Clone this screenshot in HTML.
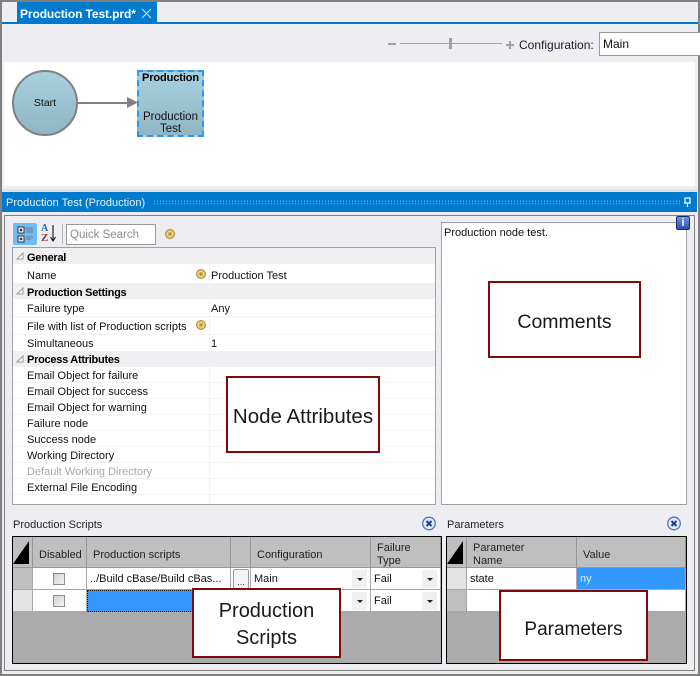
<!DOCTYPE html>
<html><head><meta charset="utf-8">
<style>
html,body{margin:0;padding:0;background:#eeeef2}
#r{position:relative;width:700px;height:676px;overflow:hidden;background:#eeeef2;font:11px/14px "Liberation Sans",sans-serif;color:#111}
#r div,#r span.a{position:absolute;box-sizing:border-box}
.t{white-space:nowrap}
.b{font-weight:bold;color:#000;letter-spacing:-.27px}
.ann{background:#fff;border:2px solid #7f0a0a;color:#1a1a1a;line-height:27px;text-align:center;display:flex;align-items:center;justify-content:center}
.coin{width:10px;height:10px;border-radius:50%;background:radial-gradient(circle at 50% 50%,#b98f35 0,#b98f35 25%,#efd88e 35%,#cda544 100%);border:1px solid #b58d35}
.h{background:#bfbfbf;border-right:1px solid #969696;border-bottom:1px solid #969696;padding:7px 0 0 6px;display:flex;align-items:center;line-height:13px;color:#222}
.h2{padding-top:6px}
.cell{background:#fff;border-right:1px solid #a8a8a8;border-bottom:1px solid #a8a8a8;line-height:23px;white-space:nowrap;overflow:hidden}
.chk{width:12px;height:12px;border:1px solid #8e8e8e;background:linear-gradient(135deg,#d0d0d0,#f5f5f5)}
.dd{width:15px;height:18px;background:#f0f0f0}
.dd:after{content:"";position:absolute;left:5px;top:8px;border:3px solid transparent;border-top:3px solid #222;border-bottom:0}
.grid{background:#ababab;border:1px solid #000}
.ln{height:1px;left:13px;width:422px;background:#f2f2f2}
</style></head><body>
<div id="r">
<!-- outer frame -->
<div style="left:0;top:0;width:700px;height:2px;background:#808080"></div>
<div style="left:0;top:0;width:2px;height:676px;background:#808080"></div>
<div style="left:698px;top:0;width:2px;height:676px;background:#808080"></div>
<div style="left:0;top:674px;width:700px;height:2px;background:#808080"></div>
<!-- tab -->
<div style="left:17px;top:2px;width:140px;height:21px;background:#007acc"></div>
<div class="t" style="left:20px;top:7px;color:#fff;font-weight:bold;font-size:12px;letter-spacing:-.1px">Production Test.prd*</div>
<svg style="position:absolute;left:141px;top:8px" width="11" height="11"><path d="M1 1L10 10M10 1L1 10" stroke="#d5e8f5" stroke-width="1" fill="none"/></svg>
<div style="left:2px;top:22px;width:696px;height:2px;background:#007acc"></div>
<!-- zoom controls -->
<div style="left:388px;top:43px;width:8px;height:2px;background:#a0a0a0"></div>
<div style="left:400px;top:43px;width:102px;height:1px;background:#a0a0a0"></div>
<div style="left:449px;top:38px;width:3px;height:11px;background:#a0a0a0"></div>
<div style="left:506px;top:44px;width:8px;height:2px;background:#a0a0a0"></div>
<div style="left:509px;top:41px;width:2px;height:8px;background:#a0a0a0"></div>
<div class="t" style="left:519px;top:38px;font-size:12px;color:#1a1a2a">Configuration:</div>
<div style="left:599px;top:32px;width:101px;height:24px;background:#fff;border:1px solid #999;border-right:0"></div>
<div class="t" style="left:603px;top:37px;font-size:12px">Main</div>
<!-- canvas -->
<div style="left:4px;top:62px;width:691px;height:124px;background:#fff"></div>
<div style="left:2px;top:189px;width:696px;height:3px;background:#e3e3e6"></div>
<div style="left:12px;top:70px;width:66px;height:66px;border-radius:50%;border:2px solid #808080;background:linear-gradient(#a8d0de,#8fb6c4)"></div>
<div class="t" style="left:12px;top:96px;width:66px;text-align:center;font-size:10.5px;color:#111">Start</div>
<div style="left:78px;top:102px;width:50px;height:2px;background:#808080"></div>
<svg style="position:absolute;left:127px;top:97px" width="11" height="12"><path d="M0 0L11 5.500L0 11Z" fill="#808080"/></svg>
<div style="left:137px;top:70px;width:67px;height:67px;border:2px dashed #2f96f0;background:linear-gradient(#a8d0de,#8fb6c4)"></div>
<div class="t" style="left:137px;top:71px;width:67px;text-align:center;font-size:11px;font-weight:bold;color:#000;letter-spacing:-.1px">Production</div>
<div class="t" style="left:137px;top:111px;width:67px;text-align:center;font-size:11.5px;line-height:12px;height:26px;padding-top:0">Production<br>Test</div>
<!-- panel title -->
<div style="left:2px;top:192px;width:695px;height:20px;background:#007acc"></div>
<div class="t" style="left:6px;top:196px;color:#e8f3fb;font-size:11px;letter-spacing:.02px">Production Test (Production)</div>
<div style="left:153px;top:200px;width:527px;height:5px;background-image:radial-gradient(circle,#4aa3db .7px,transparent .8px);background-size:3px 2.500px"></div>
<svg style="position:absolute;left:683px;top:197px" width="9" height="11"><path d="M2 1H7V6H2ZM1 6H8M4.500 6V10" stroke="#fff" stroke-width="1.200" fill="none"/></svg>
<!-- panel frame -->
<div style="left:4px;top:215px;width:691px;height:456px;border:1px solid #808080;background:#eeeef2"></div>
<!-- property toolbar -->
<div style="left:13px;top:223px;width:24px;height:22px;background:#6cbcf5;border-radius:2px"></div>
<svg style="position:absolute;left:13px;top:223px" width="24" height="22"><rect x="5" y="4" width="6" height="6" fill="#fff" stroke="#333"/><rect x="5" y="13" width="6" height="6" fill="#fff" stroke="#333"/><path d="M6.500 7H9.500M8 5.500V8.500M6.500 16H9.500M8 14.500V17.500" stroke="#000"/><path d="M13 5H20M13 7H20M13 9H20M13 14H20M13 16H18" stroke="#6a7a85"/></svg>
<div class="t" style="left:41px;top:224px;font:bold 10px/10px 'Liberation Serif',serif;color:#2b5fb0">A</div>
<div class="t" style="left:41px;top:233px;font:bold 11px/11px 'Liberation Serif',serif;color:#8c3a3a">Z</div>
<svg style="position:absolute;left:49px;top:225px" width="9" height="18"><path d="M4 0V15M1.500 12L4 16L6.500 12" stroke="#111" stroke-width="1.100" fill="none"/></svg>
<div style="left:62px;top:224px;width:1px;height:20px;background:#b5b5b5"></div>
<div style="left:66px;top:224px;width:90px;height:21px;background:#fff;border:1px solid #999"></div>
<div class="t" style="left:70px;top:228px;font-size:11.500px;color:#8c8c8c">Quick Search</div>
<div class="coin" style="left:165px;top:229px"></div>
<!-- property grid -->
<div style="left:12px;top:247px;width:424px;height:258px;background:#fff;border:1px solid #a0a0a0"></div>
<div style="left:13px;top:248px;width:422px;height:16px;background:#f0f0f2"></div>
<div style="left:13px;top:283px;width:422px;height:16px;background:#f0f0f2"></div>
<div style="left:13px;top:351px;width:422px;height:16px;background:#f0f0f2"></div>
<div style="left:209px;top:264px;width:1px;height:240px;background:#f2f2f2"></div>
<div class="ln" style="top:316px"></div>
<div class="ln" style="top:334px"></div>
<div class="ln" style="top:382px"></div>
<div class="ln" style="top:398px"></div>
<div class="ln" style="top:414px"></div>
<div class="ln" style="top:430px"></div>
<div class="ln" style="top:446px"></div>
<div class="ln" style="top:462px"></div>
<div class="ln" style="top:478px"></div>
<div class="ln" style="top:494px"></div>
<svg style="position:absolute;left:15px;top:250px" width="10" height="115"><path d="M2 9L8 9L8 3ZM2 44L8 44L8 38ZM2 112L8 112L8 106Z" fill="#fff" stroke="#9a9a9a"/></svg>
<div class="t b" style="left:27px;top:251px">General</div>
<div class="t" style="left:27px;top:269px">Name</div>
<div class="coin" style="left:196px;top:269px"></div>
<div class="t" style="left:211px;top:269px">Production Test</div>
<div class="t b" style="left:27px;top:286px">Production Settings</div>
<div class="t" style="left:27px;top:302px">Failure type</div>
<div class="t" style="left:211px;top:302px">Any</div>
<div class="t" style="left:27px;top:320px">File with list of Production scripts</div>
<div class="coin" style="left:196px;top:320px"></div>
<div class="t" style="left:27px;top:337px">Simultaneous</div>
<div class="t" style="left:211px;top:337px">1</div>
<div class="t b" style="left:27px;top:353px">Process Attributes</div>
<div class="t" style="left:27px;top:369px">Email Object for failure</div>
<div class="t" style="left:27px;top:385px">Email Object for success</div>
<div class="t" style="left:27px;top:401px">Email Object for warning</div>
<div class="t" style="left:27px;top:417px">Failure node</div>
<div class="t" style="left:27px;top:433px">Success node</div>
<div class="t" style="left:27px;top:449px">Working Directory</div>
<div class="t" style="left:27px;top:465px;color:#a8a8a8">Default Working Directory</div>
<div class="t" style="left:27px;top:481px">External File Encoding</div>
<!-- comments -->
<div style="left:441px;top:222px;width:246px;height:283px;background:#fff;border:1px solid #a0a0a0"></div>
<div class="t" style="left:444px;top:226px">Production node test.</div>
<div style="left:676px;top:216px;width:14px;height:14px;background:linear-gradient(#6f92e6,#2d4fb5);border:1px solid #1b2a70;border-radius:2px"></div>
<div class="t" style="left:676px;top:216px;width:14px;text-align:center;color:#fff;font-weight:bold;font-size:11px">i</div>
<!-- scripts -->
<div class="t" style="left:13px;top:518px;color:#222">Production Scripts</div>
<svg style="position:absolute;left:421px;top:516px" width="16" height="16"><circle cx="8" cy="7.500" r="6.300" fill="#e4ecfa" stroke="#4b74cc" stroke-width="1.300"/><path d="M5.500 5L10.500 10M10.500 5L5.500 10" stroke="#1c3d9a" stroke-width="2"/></svg>
<div class="grid" style="left:12px;top:536px;width:430px;height:128px"></div>
<div class="h" style="left:13px;top:537px;width:20px;height:31px;padding:0"></div>
<svg style="position:absolute;left:13px;top:541px" width="17" height="23"><path d="M16 0V23H0Z" fill="#000"/></svg>
<div class="h" style="left:33px;top:537px;width:54px;height:31px">Disabled</div>
<div class="h" style="left:87px;top:537px;width:144px;height:31px">Production scripts</div>
<div class="h" style="left:231px;top:537px;width:20px;height:31px"></div>
<div class="h" style="left:251px;top:537px;width:120px;height:31px">Configuration</div>
<div class="h h2" style="left:371px;top:537px;width:70px;height:31px">Failure<br>Type</div>
<div class="cell" style="left:13px;top:568px;width:20px;height:22px;background:#bfbfbf"></div>
<div class="cell" style="left:33px;top:568px;width:54px;height:22px"></div>
<div class="cell t" style="left:87px;top:568px;width:144px;height:22px;padding-left:3px">../Build cBase/Build cBas...</div>
<div class="cell" style="left:231px;top:568px;width:20px;height:22px"></div>
<div class="cell t" style="left:251px;top:568px;width:120px;height:22px;padding-left:3px">Main</div>
<div class="cell t" style="left:371px;top:568px;width:70px;height:22px;padding-left:3px">Fail</div>
<div class="cell" style="left:13px;top:590px;width:20px;height:22px;background:#e3e3e3"></div>
<div class="cell" style="left:33px;top:590px;width:54px;height:22px"></div>
<div class="cell" style="left:87px;top:590px;width:144px;height:22px;background:#3399ff;border:1px dotted #111"></div>
<div class="cell" style="left:231px;top:590px;width:20px;height:22px"></div>
<div class="cell" style="left:251px;top:590px;width:120px;height:22px"></div>
<div class="cell t" style="left:371px;top:590px;width:70px;height:22px;padding-left:3px">Fail</div>
<div class="chk" style="left:53px;top:573px"></div>
<div class="chk" style="left:53px;top:595px"></div>
<div style="left:233px;top:569px;width:16px;height:20px;background:#f4f4f4;border:1px solid #9a9a9a;border-radius:2px"></div>
<div class="t" style="left:233px;top:575px;width:16px;text-align:center;font-size:9px;color:#333">...</div>
<div class="dd" style="left:352px;top:570px"></div>
<div class="dd" style="left:422px;top:570px"></div>
<div class="dd" style="left:352px;top:592px"></div>
<div class="dd" style="left:422px;top:592px"></div>
<!-- parameters -->
<div class="t" style="left:447px;top:518px;color:#222">Parameters</div>
<svg style="position:absolute;left:666px;top:516px" width="16" height="16"><circle cx="8" cy="7.500" r="6.300" fill="#e4ecfa" stroke="#4b74cc" stroke-width="1.300"/><path d="M5.500 5L10.500 10M10.500 5L5.500 10" stroke="#1c3d9a" stroke-width="2"/></svg>
<div class="grid" style="left:446px;top:536px;width:241px;height:128px"></div>
<div class="h" style="left:447px;top:537px;width:20px;height:31px;padding:0"></div>
<svg style="position:absolute;left:447px;top:541px" width="17" height="23"><path d="M16 0V23H0Z" fill="#000"/></svg>
<div class="h h2" style="left:467px;top:537px;width:110px;height:31px">Parameter<br>Name</div>
<div class="h" style="left:577px;top:537px;width:109px;height:31px">Value</div>
<div class="cell" style="left:447px;top:568px;width:20px;height:22px;background:#e3e3e3"></div>
<div class="cell t" style="left:467px;top:568px;width:110px;height:22px;padding-left:3px">state</div>
<div class="cell t" style="left:577px;top:568px;width:109px;height:22px;padding-left:3px;background:#3399ff;color:#dfeeff">ny</div>
<div class="cell" style="left:447px;top:590px;width:20px;height:22px;background:#bfbfbf"></div>
<div class="cell" style="left:467px;top:590px;width:219px;height:22px"></div>
<!-- annotations -->
<div class="ann" style="left:226px;top:376px;width:154px;height:77px;font-size:20.500px;padding-top:3px">Node Attributes</div>
<div class="ann" style="left:488px;top:281px;width:153px;height:77px;font-size:19.500px;padding-top:5px">Comments</div>
<div class="ann" style="left:192px;top:588px;width:149px;height:70px;font-size:20px;padding-top:3px">Production<br>Scripts</div>
<div class="ann" style="left:499px;top:590px;width:149px;height:71px;font-size:19px;padding-top:7px">Parameters</div>
</div>
</body></html>
